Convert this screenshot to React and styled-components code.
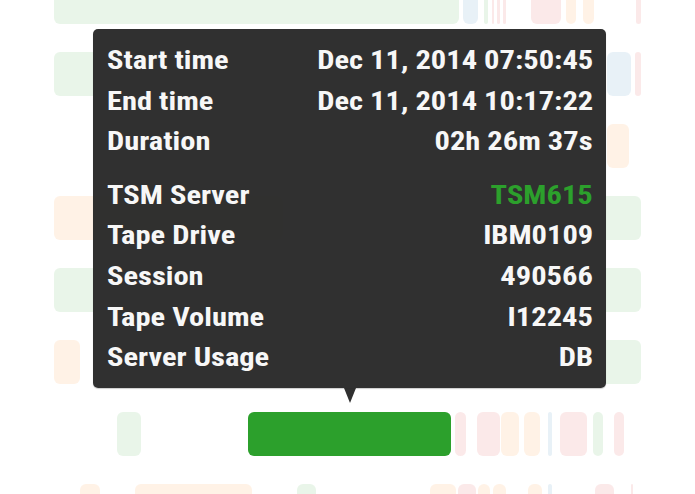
import React from "react";
import styled, { createGlobalStyle } from "styled-components";

const Global = createGlobalStyle`
  html, body { margin: 0; padding: 0; background: #ffffff; }
  body { width: 695px; height: 494px; overflow: hidden; font-family: "Roboto Condensed", Roboto, "Liberation Sans", sans-serif; }
`;

const C = {
  green: "#2ca02c",
  orange: "#ff7f0e",
  red: "#d62728",
  blue: "#1f77b4",
};

const Stage = styled.div`
  position: relative;
  width: 695px;
  height: 494px;
  overflow: hidden;
`;

const Lanes = styled.div`
  display: flex;
  flex-direction: column;
  gap: 28px;
  margin-top: -20px;
`;

const Lane = styled.div`
  position: relative;
  height: 44px;
  flex: none;
`;

const Bar = styled.div`
  position: absolute;
  top: 0;
  bottom: 0;
  border-radius: 6px;
  background: ${(p) => p.$color};
  opacity: ${(p) => (p.$active ? 1 : 0.1)};
`;

const lanes = [
  [
    [54, 459, "green"], [463, 478, "blue"], [484, 488, "green"], [492, 494, "red"], [497, 500, "red"],
    [503, 506, "red"], [531, 561, "red"], [566, 576, "orange"], [583, 594, "orange"], [636, 641, "red"],
  ],
  [
    [54, 240, "green"], [250, 300, "green"], [607, 631, "blue"], [635, 641, "red"],
  ],
  [
    [228, 390, "green"], [405, 520, "green"], [607, 629, "orange"],
  ],
  [
    [54, 283, "orange"], [430, 641, "green"],
  ],
  [
    [54, 330, "green"], [445, 641, "green"],
  ],
  [
    [54, 80, "orange"], [430, 506, "green"], [520, 641, "green"],
  ],
  [
    [117, 141, "green"], [248, 451, "green", true], [455, 466, "red"], [477, 500, "red"], [501, 519, "orange"],
    [524, 540, "orange"], [548, 552, "blue"], [560, 587, "red"], [593, 603, "green"], [614, 624, "red"],
  ],
  [
    [80, 100, "orange"], [135, 252, "orange"], [297, 316, "green"], [430, 456, "orange"], [458, 476, "red"],
    [478, 490, "orange"], [493, 506, "orange"], [528, 542, "orange"], [548, 552, "blue"], [595, 614, "red"], [631, 633, "red"],
  ],
];

const Tooltip = styled.div`
  position: absolute;
  left: 93px;
  top: 29px;
  width: 513px;
  box-sizing: border-box;
  padding: 12px 13px 9px 14px;
  background: rgba(40, 40, 40, 0.96);
  border-radius: 5px;
  color: #f7f7f7;
  font-family: "Roboto Condensed", Roboto, "Liberation Sans", sans-serif;
  font-weight: 700;
  font-size: 25px;
  display: flex;
  flex-direction: column;
  gap: 13px;
  box-shadow: 0 1px 1px rgba(0, 0, 0, 0.2);
`;

const Arrow = styled.div`
  position: absolute;
  left: 251px;
  bottom: -15px;
  width: 0;
  height: 0;
  border-left: 6px solid transparent;
  border-right: 6px solid transparent;
  border-top: 15px solid rgba(40, 40, 40, 0.96);
`;

const Group = styled.div`
  display: flex;
  flex-direction: column;
`;

const Row = styled.div`
  display: flex;
  justify-content: space-between;
  align-items: center;
  height: 40.6px;
  line-height: 40.6px;
`;

const Label = styled.span`
  display: inline-block;
  transform: scaleX(1.22);
  transform-origin: left center;
`;

const Value = styled.span`
  display: inline-block;
  transform: scaleX(1.22);
  transform-origin: right center;
  color: ${(p) => p.$color || "#f7f7f7"};
`;

const groups = [
  [
    ["Start time", "Dec 11, 2014 07:50:45"],
    ["End time", "Dec 11, 2014 10:17:22"],
    ["Duration", "02h 26m 37s"],
  ],
  [
    ["TSM Server", "TSM615", C.green],
    ["Tape Drive", "IBM0109"],
    ["Session", "490566"],
    ["Tape Volume", "I12245"],
    ["Server Usage", "DB"],
  ],
];

export default function App() {
  return (
    <Stage>
      <Global />
      <Lanes>
        {lanes.map((bars, i) => (
          <Lane key={i}>
            {bars.map(([a, b, c, active], j) => (
              <Bar key={j} $color={C[c]} $active={active} style={{ left: a, width: b - a }} />
            ))}
          </Lane>
        ))}
      </Lanes>
      <Tooltip>
        {groups.map((g, i) => (
          <Group key={i}>
            {g.map(([l, v, col]) => (
              <Row key={l}>
                <Label>{l}</Label>
                <Value $color={col}>{v}</Value>
              </Row>
            ))}
          </Group>
        ))}
        <Arrow />
      </Tooltip>
    </Stage>
  );
}
